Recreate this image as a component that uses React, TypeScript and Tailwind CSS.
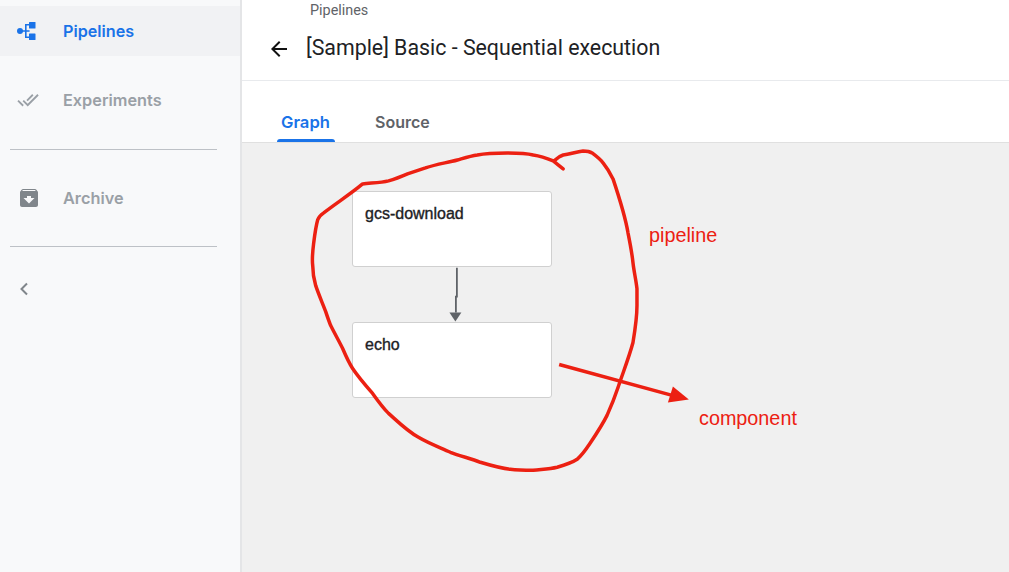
const scribble =
  "M563 168 L553 160 C546 157 540 155 533 154 C525 152 516 152 507 152 C497 152 487 152 477 154 C470 155 464 157 457 159 C446 162 436 163 425 167 C419 169 413 171 407 173 C400 176 395 178 388 180 C380 182 370 182 362 183 C350 193 336 202 323 212 C320 214 318 216 317 219 C315 226 314 234 313 242 C312 250 311 257 312 265 C312 272 313 278 315 285 C318 294 322 303 325 311 C327 317 328 320 330 325 C334 333 338 340 342 348 C345 355 348 362 352 368 C358 377 365 385 372 393 C377 400 382 407 388 413 C398 422 407 431 418 437 C428 443 439 447 450 452 C460 456 470 458 480 462 C490 465 500 468 510 469 C518 470 525 470 533 470 C541 469 549 469 557 467 C564 465 571 463 577 459 C582 455 586 449 590 443 C596 434 602 425 607 415 C611 406 615 396 618 387 C623 372 629 357 633 342 C635 330 637 318 637 305 C637 299 637 294 637 288 C636 279 634 271 633 262 C632 252 630 242 628 232 C625 214 619 196 613 178 C610 172 607 167 603 162 C600 158 596 155 592 152 C589 150 586 150 583 150 C576 151 570 153 563 154 C560 155 557 157 555 159";

export default function App() {
  return (
    <div className="flex h-[572px] w-[1009px] overflow-hidden bg-white font-['Roboto',sans-serif]">
      <aside className="w-[240px] shrink-0 bg-[#f8f9fa] pt-[6px] font-['Inter',sans-serif]">
        <div className="flex h-[50px] items-center bg-[#f1f2f4]">
          <svg width="20" height="20" viewBox="0 0 20 20" className="ml-[17px]" fill="#1a73e8">
            <circle cx="3" cy="10" r="3" />
            <path d="M3 9.2h5V3h4v1.6H9.6v4.6h3v1.6h-3v4.6H12V17H8v-6.2H3z" />
            <rect x="12" y="1" width="6.5" height="6.5" rx="0.5" />
            <rect x="12" y="12.5" width="6.5" height="6.5" rx="0.5" />
          </svg>
          <span className="ml-[26px] text-[16.2px] font-semibold text-[#1a73e8]">Pipelines</span>
        </div>
        <div className="mt-[25px] flex h-[38px] items-center">
          <svg width="22" height="22" viewBox="0 0 24 24" className="ml-[17px]" fill="#9aa0a6">
            <path d="M18 7l-1.41-1.41-6.34 6.34 1.41 1.41L18 7zm4.24-1.41L11.66 16.17 7.48 12l-1.41 1.41L11.66 19l12-12-1.42-1.41zM.41 13.41L6 19l1.41-1.41L1.83 12 .41 13.41z" />
          </svg>
          <span className="ml-[24px] text-[16.3px] font-semibold text-[#9aa0a6]">Experiments</span>
        </div>
        <div className="mx-[10px] mt-[30px] w-[207px] border-t border-[#bdc1c6]" />
        <div className="mt-[29px] flex h-[38px] items-center">
          <svg width="24" height="24" viewBox="0 0 24 24" className="ml-[17px]" fill="#80868b">
            <path d="M20.54 5.23l-1.39-1.68C18.88 3.21 18.47 3 18 3H6c-.47 0-.88.21-1.16.55L3.46 5.23C3.17 5.57 3 6.02 3 6.5V19c0 1.1.9 2 2 2h14c1.1 0 2-.9 2-2V6.5c0-.48-.17-.93-.46-1.27zM12 17.5L6.5 12H10v-2h4v2h3.5L12 17.5zM5.12 5l.81-1h12l.94 1H5.12z" />
          </svg>
          <span className="ml-[22px] text-[16.3px] font-semibold text-[#9aa0a6]">Archive</span>
        </div>
        <div className="mx-[10px] mt-[29px] w-[207px] border-t border-[#bdc1c6]" />
        <svg width="10" height="14" viewBox="0 0 10 14" className="ml-[19px] mt-[35px]" fill="none" stroke="#80868b" strokeWidth="2">
          <path d="M8 1.5 2.5 7 8 12.5" />
        </svg>
      </aside>

      <main className="flex min-w-0 flex-1 flex-col border-l-2 border-[#e4e5e7]">
        <header className="h-[81px] shrink-0 border-b border-[#e8eaed]">
          <div className="pl-[68px] pt-[3px] text-[14.4px] leading-[16px] text-[#5f6368]">Pipelines</div>
          <div className="mt-[15px] flex items-center">
            <svg width="24" height="24" viewBox="0 0 24 24" className="ml-[25px] mt-[2px]" fill="#111">
              <path d="M20 11H7.83l5.59-5.59L12 4l-8 8 8 8 1.41-1.41L7.83 13H20v-2z" />
            </svg>
            <h1 className="ml-[15px] text-[21.35px] leading-[28px] font-normal text-[#202124]">
              [Sample] Basic - Sequential execution
            </h1>
          </div>
        </header>

        <nav className="flex h-[61px] shrink-0 pl-[35px] pt-[30px] font-['Inter',sans-serif] text-[16px] font-semibold">
          <div className="relative h-[31px] w-[58px] pl-[4px] text-[16.6px] leading-[22px] text-[#1a73e8]">
            Graph
            <div className="absolute inset-x-0 bottom-0 h-[3px] rounded-t-[3px] bg-[#1a73e8]" />
          </div>
          <div className="ml-[40px] leading-[22px] text-[#5f6368]">Source</div>
        </nav>

        <section className="relative flex-1 border-t border-[#e0e0e0] bg-[#f0f0f0] font-['Liberation_Sans',sans-serif]">
          <div className="absolute left-[110px] top-[48px] h-[76px] w-[200px] rounded-[3px] border border-[#d0d0d0] bg-white px-3 py-[13px] text-[16px] leading-[18px] text-[#202124] [-webkit-text-stroke:0.35px_#202124]">
            gcs-download
          </div>
          <div className="absolute left-[110px] top-[179px] h-[76px] w-[200px] rounded-[3px] border border-[#d0d0d0] bg-white px-3 py-[13px] text-[16px] leading-[18px] text-[#202124] [-webkit-text-stroke:0.35px_#202124]">
            echo
          </div>

          <svg className="absolute inset-0 h-full w-full" viewBox="242 142 767 430" fill="none">
            <path d="M456.5 267 V296 H455.5 V312" stroke="#5f6368" strokeWidth="1.8" />
            <path d="M449 312 H461 L455 321 Z" fill="#5f6368" />
            <path d={scribble} stroke="#ec2012" strokeWidth="3.5" strokeLinecap="round" strokeLinejoin="round" />
            <path d="M559 364 L676 396" stroke="#ec2012" strokeWidth="3.5" />
            <path d="M673 386 L689 399 L668 402 Z" fill="#ec2012" />
          </svg>

          <span className="absolute left-[407px] top-[80px] text-[19.8px] leading-[24px] text-[#ec2012]">pipeline</span>
          <span className="absolute left-[457px] top-[263px] text-[19.8px] leading-[24px] text-[#ec2012]">component</span>
        </section>
      </main>
    </div>
  );
}
